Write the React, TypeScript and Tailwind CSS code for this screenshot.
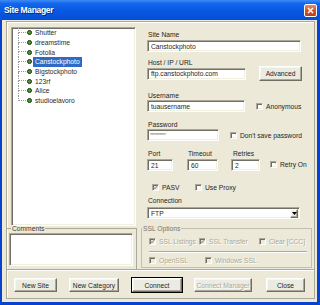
import React from "react";

const sunken =
  "border border-t-[#aca899] border-l-[#aca899] border-r-white border-b-white shadow-[inset_1px_1px_0_#716f64,inset_-1px_-1px_0_#f1efe2]";
const raised =
  "border border-t-white border-l-white border-r-[#716f64] border-b-[#716f64] shadow-[inset_-1px_-1px_0_#aca899,inset_1px_1px_0_#f7f6f0]";
const grayText = "text-[#aca899] [text-shadow:1px_1px_0_#ffffff]";

const SITES = [
  "Shutter",
  "dreamstime",
  "Fotolia",
  "Canstockphoto",
  "Bigstockphoto",
  "123rf",
  "Alice",
  "studioelavoro",
];

type CheckProps = { label: string; checked?: boolean; disabled?: boolean; dim?: boolean };

function Check({ label, checked = false, disabled = false, dim = false }: CheckProps) {
  return (
    <div className="flex items-center gap-[3px]">
      <span
        className={`flex h-[7px] w-[7px] shrink-0 items-center justify-center ${sunken} ${
          disabled ? "bg-[#ece9d8]" : "bg-white"
        }`}
      >
        {checked && (
          <svg width="5" height="5" viewBox="0 0 5 5">
            <path
              d="M0.6 2.2 L1.9 3.6 L4.4 0.9"
              fill="none"
              stroke={disabled ? "#a3a08f" : "#000"}
              strokeWidth="1.1"
            />
          </svg>
        )}
      </span>
      <span className={`whitespace-nowrap ${dim ? grayText : "text-[#1e1e1e]"}`}>{label}</span>
    </div>
  );
}

function Btn({ label, className, def = false, disabled = false }: { label: string; className: string; def?: boolean; disabled?: boolean }) {
  return (
    <div
      className={`flex h-[14px] items-center justify-center bg-[#ecebe2] ${raised} ${
        def ? "outline outline-black" : ""
      } ${className}`}
    >
      <span className={disabled ? grayText : "text-[#1e1e1e]"}>{label}</span>
    </div>
  );
}

function Field({ value, className }: { value: string; className: string }) {
  return (
    <div className={`flex h-[12px] items-center bg-white pl-[3px] ${sunken} ${className}`}>
      <span className="whitespace-nowrap text-[#1e1e1e]">{value}</span>
    </div>
  );
}

function Label({ text, className = "" }: { text: string; className?: string }) {
  return <div className={`h-[9px] pl-[1px] text-[#1e1e1e] ${className}`}>{text}</div>;
}

export default function App() {
  return (
    <div className="flex h-[305px] w-[320px] flex-col bg-[#0843d0] font-['Liberation_Sans',Arial,sans-serif] text-[6.7px] leading-[9px]">
      {/* title bar */}
      <div className="flex h-[20px] shrink-0 items-center justify-between bg-[linear-gradient(180deg,#3d8cf6_0%,#1266ec_18%,#0857e2_55%,#054ed6_100%)] pl-[4px] pr-[3px]">
        <span className="text-[8.5px] font-bold tracking-[-0.3px] text-white [text-shadow:1px_1px_0_#0a2a80]">
          Site Manager
        </span>
        <div className="flex h-[13px] w-[13px] items-center justify-center rounded-[2px] border border-white bg-[linear-gradient(180deg,#e88a6c_0%,#d5532f_50%,#c23d17_100%)]">
          <svg width="7" height="7" viewBox="0 0 7 7">
            <path d="M1 1 L6 6 M6 1 L1 6" stroke="#fff" strokeWidth="1.5" />
          </svg>
        </div>
      </div>

      {/* body */}
      <div className="mb-[3px] ml-[2px] mr-[3px] flex flex-1 flex-col bg-[#ece9d8] pb-[3px] pl-[4px] pr-[2px] pt-[1px]">
        <div className="flex flex-1 flex-col border border-[#aca899] shadow-[inset_1px_1px_0_#ffffff]">
          <div className="flex h-[247px] shrink-0">
            {/* left column */}
            <div className="flex w-[130px] shrink-0 flex-col">
              <div className={`ml-[4px] mt-[5px] h-[199px] w-[125px] bg-white ${sunken}`}>
                {SITES.map((s, i) => (
                  <div key={s} className="flex h-[9.7px] items-center">
                    <div className="ml-[6px] flex h-full w-[8px] flex-col">
                      <div className="h-1/2 border-b border-l border-dotted border-[#9a9a9a]" />
                      <div
                        className={`h-1/2 ${
                          i < SITES.length - 1 ? "border-l border-dotted border-[#9a9a9a]" : ""
                        }`}
                      />
                    </div>
                    <span className="ml-[1px] h-[5px] w-[5px] rounded-full border-[1.5px] border-[#14300f] bg-[#4f9a2c]" />
                    <span
                      className={`ml-[1px] flex h-full items-center px-[2px] ${
                        s === "Canstockphoto" ? "bg-[#316ac5] text-white" : "text-[#2a2a2a]"
                      }`}
                    >
                      {s}
                    </span>
                  </div>
                ))}
              </div>
              <fieldset className="-mt-[2px] flex-1 border-r border-t border-[#aca899]">
                <legend className="ml-[4px] px-[1px] leading-[9px] text-[#3a3a3a]">Comments</legend>
                <div className={`ml-[2px] h-[33px] w-[124px] bg-white ${sunken}`} />
              </fieldset>
            </div>

            {/* right column */}
            <div className="flex flex-1 flex-col pl-[10px]">
              <Label text="Site Name" className="mt-[8px]" />
              <Field value="Canstockphoto" className="mt-[1px] w-[154px]" />

              <Label text="Host / IP / URL" className="mt-[6px]" />
              <div className="-mt-[1px] flex h-[15px] items-center gap-[13px]">
                <Field value="ftp.canstockphoto.com" className="w-[99px]" />
                <Btn label="Advanced" className="h-[15px] w-[43px]" />
              </div>

              <Label text="Username" className="mt-[10px]" />
              <div className="flex items-center gap-[11px]">
                <Field value="tuausername" className="w-[98px]" />
                <Check label="Anonymous" />
              </div>

              <Label text="Password" className="mt-[8px]" />
              <div className="flex items-center gap-[11px]">
                <div className={`flex h-[12px] w-[72px] items-center bg-white pl-[2px] ${sunken}`}>
                  <span className="text-[5px] tracking-[-0.4px] text-[#777]">**********</span>
                </div>
                <Check label="Don't save password" />
              </div>

              <div className="mt-[8px] flex items-end">
                <div className="flex w-[26px] flex-col">
                  <Label text="Port" />
                  <Field value="21" className="mt-[1px] w-[26px]" />
                </div>
                <div className="ml-[14px] flex w-[31px] flex-col">
                  <Label text="Timeout" />
                  <Field value="60" className="mt-[1px] w-[31px]" />
                </div>
                <div className="ml-[13px] flex w-[29px] flex-col">
                  <Label text="Retries" className="pl-[2px]" />
                  <Field value="2" className="mt-[1px] w-[29px]" />
                </div>
                <div className="mb-[2px] ml-[10px]">
                  <Check label="Retry On" />
                </div>
              </div>

              <div className="mt-[12px] flex h-[9px] items-center pl-[5px]">
                <div className="w-[43px]">
                  <Check label="PASV" checked disabled />
                </div>
                <Check label="Use Proxy" />
              </div>

              <Label text="Connection" className="mt-[4px]" />
              <div className={`mt-[2px] flex h-[12px] w-[153px] items-center justify-between bg-white pl-[3px] pr-[1px] ${sunken}`}>
                <span className="text-[#1e1e1e]">FTP</span>
                <div className={`flex h-[9px] w-[8px] items-center justify-center bg-[#ece9d8] ${raised}`}>
                  <svg width="5" height="3" viewBox="0 0 5 3">
                    <path d="M0 0 H5 L2.5 3 Z" fill="#000" />
                  </svg>
                </div>
              </div>

              <fieldset className="-ml-[6px] mt-[5px] w-[171px] border border-[#c2bfb0]">
                <legend className="px-[1px] leading-[9px] text-[#77746a]">SSL Options</legend>
                <div className="mt-[4px] flex h-[9px] items-center pl-[7px]">
                  <div className="w-[50px]">
                    <Check label="SSL Listings" checked disabled dim />
                  </div>
                  <div className="w-[60px]">
                    <Check label="SSL Transfer" checked disabled dim />
                  </div>
                  <Check label="Clear [CCC]" disabled dim />
                </div>
                <div className="ml-[7px] mr-[4px] mt-[5px] h-[2px] border-b border-t border-b-white border-t-[#aca899]" />
                <div className="mb-[2px] mt-[3px] flex h-[9px] items-center pl-[7px]">
                  <div className="w-[56px]">
                    <Check label="OpenSSL" disabled dim />
                  </div>
                  <Check label="Windows SSL" disabled dim />
                </div>
              </fieldset>
            </div>
          </div>

          <div className="h-[2px] shrink-0 border-b border-t border-b-white border-t-[#aca899]" />

          <div className="flex flex-1 items-start pl-[7px] pt-[7px]">
            <Btn label="New Site" className="w-[43px]" />
            <Btn label="New Category" className="ml-[12px] w-[50px]" />
            <Btn label="Connect" className="ml-[13px] w-[50px]" def />
            <Btn label="Connect Manager" className="ml-[12px] w-[58px]" disabled />
            <Btn label="Close" className="ml-[14px] w-[39px]" />
          </div>
        </div>
      </div>
    </div>
  );
}
